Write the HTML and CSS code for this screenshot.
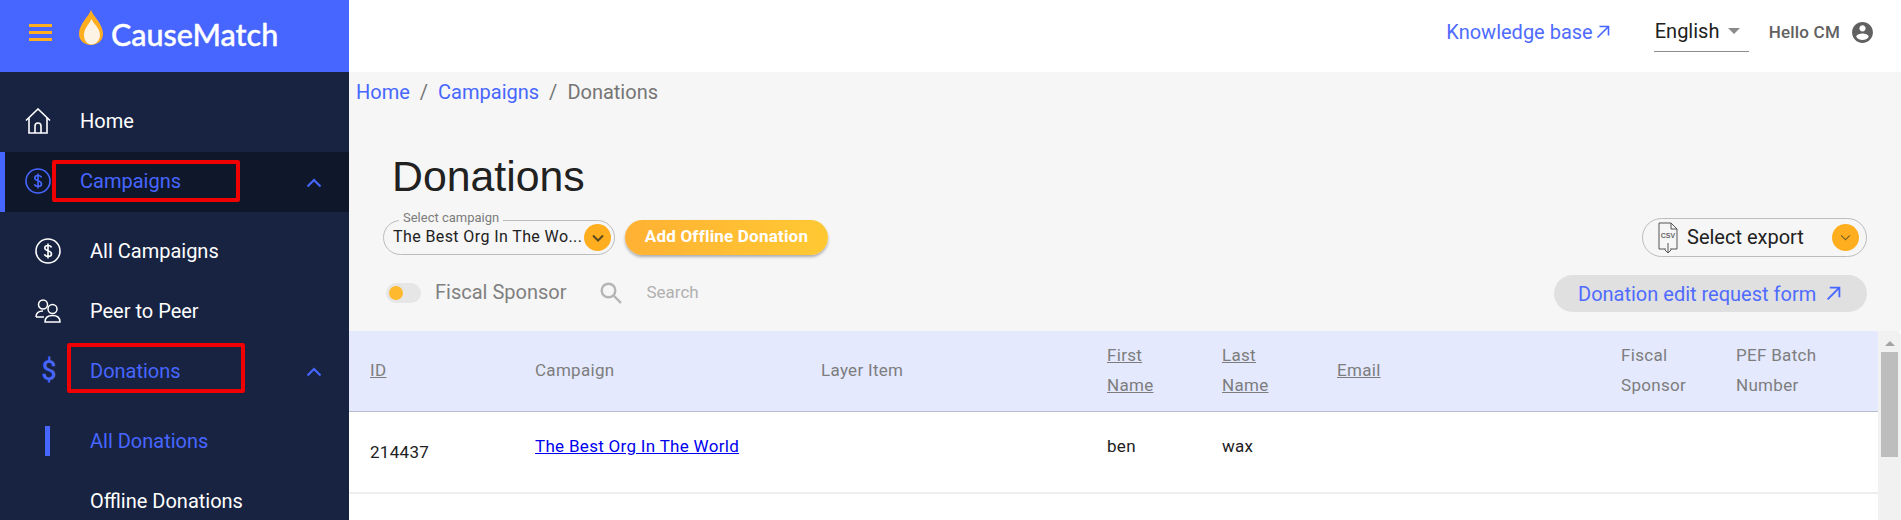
FILE: index.html
```html
<!DOCTYPE html>
<html lang="en">

<head>
    <meta charset="UTF-8">
    <meta name="viewport" content="width=device-width, initial-scale=1.0">
    <title>CauseMatch - Donations</title>
    <link rel="stylesheet" href="styles.css">
</head>

<body>
    <div class="app">
        <aside class="sidebar">
            <div class="brand">
                <div class="burger"><span></span><span></span><span></span></div>
                <svg class="flame" viewBox="0 0 24 36" width="24" height="36">
                    <path d="M12 0C14 6 24 14 24 24C24 31 18 35 12 35C6 35 0 31 0 24C0 14 10 6 12 0Z" fill="#ffae1f" />
                    <path d="M12.500 9C14.500 14 21 18 21 25C21 30 17 34.500 12.500 34.500C8 34.500 5 30 5 25C5 18 10.500 14 12.500 9Z" fill="#fdf3e4" />
                </svg>
                <span class="brand-name">CauseMatch</span>
            </div>

            <nav class="nav">
                <a class="nav-item">
                    <svg class="nav-icon" viewBox="0 0 26 26" width="26" height="26" fill="none" stroke="#fff" stroke-width="1.6">
                        <path d="M1 12.500L13 1L25 12.500" />
                        <path d="M4 10V25H22V10" />
                        <path d="M10 25V18A3 3 0 0 1 16 18V25" />
                    </svg>
                    Home
                </a>
                <a class="nav-item nav-item-active">
                    <svg class="nav-icon" viewBox="0 0 26 26" width="26" height="26" fill="none" stroke="#4766ff" stroke-width="1.6">
                        <circle cx="13" cy="13" r="12" />
                        <path d="M16.500 9.500C16 8 15 7.500 13 7.500C11 7.500 9.800 8.600 9.800 10C9.800 13.500 16.500 12 16.500 16C16.500 17.500 15 18.500 13 18.500C11 18.500 10 17.800 9.500 16.300M13 5.500V20.500" />
                    </svg>
                    Campaigns
                    <svg class="chevron" viewBox="0 0 16 10" width="16" height="10" fill="none" stroke="#4766ff" stroke-width="2.2">
                        <path d="M1.500 8.500L8 2L14.500 8.500" />
                    </svg>
                </a>
                <div class="sub-nav">
                    <a class="nav-item sub-item">
                        <svg class="nav-icon" viewBox="0 0 26 26" width="26" height="26" fill="none" stroke="#fff" stroke-width="1.6">
                            <circle cx="13" cy="13" r="12" />
                            <path d="M16.500 9.500C16 8 15 7.500 13 7.500C11 7.500 9.800 8.600 9.800 10C9.800 13.500 16.500 12 16.500 16C16.500 17.500 15 18.500 13 18.500C11 18.500 10 17.800 9.500 16.300M13 5.500V20.500" />
                        </svg>
                        All Campaigns
                    </a>
                    <a class="nav-item sub-item">
                        <svg class="nav-icon" viewBox="0 0 26 24" width="26" height="24" fill="none" stroke="#fff" stroke-width="1.5">
                            <circle cx="8" cy="5.500" r="4.500" />
                            <path d="M1 18C1 14 4 12 8 12" />
                            <path d="M1 18H9" />
                            <circle cx="17.500" cy="10" r="4.500" />
                            <path d="M10 23C10 18 13 16.500 17.500 16.500C22 16.500 25 18 25 23Z" />
                        </svg>
                        Peer to Peer
                    </a>
                    <a class="nav-item sub-item sub-item-open">
                        <span class="dollar">$</span>
                        Donations
                        <svg class="chevron" viewBox="0 0 16 10" width="16" height="10" fill="none" stroke="#4766ff" stroke-width="2.2">
                            <path d="M1.500 8.500L8 2L14.500 8.500" />
                        </svg>
                    </a>
                    <div class="leaf-nav">
                        <a class="nav-item sub-item leaf-active"><span class="leaf-bar"></span>All Donations</a>
                        <a class="nav-item sub-item"><span class="leaf-spacer"></span>Offline Donations</a>
                    </div>
                </div>
            </nav>

            <div class="mark mark-campaigns"></div>
            <div class="mark mark-donations"></div>
        </aside>

        <div class="content">
            <header class="topbar">
                <a class="kb-link">Knowledge base
                    <svg viewBox="0 0 14 14" width="14" height="14" fill="none" stroke="#4766ff" stroke-width="1.6">
                        <path d="M1.500 12.500L12.500 1.500M3.500 1.500H12.500V10.500" />
                    </svg>
                </a>
                <div class="lang">English<span class="caret"></span></div>
                <div class="user">
                    Hello CM
                    <svg viewBox="0 0 24 24" width="25" height="25" fill="#616161">
                        <path d="M12 2C6.480 2 2 6.480 2 12s4.480 10 10 10 10-4.480 10-10S17.520 2 12 2zm0 3c1.660 0 3 1.340 3 3s-1.340 3-3 3-3-1.340-3-3 1.340-3 3-3zm0 14.200c-2.500 0-4.710-1.280-6-3.220.030-1.990 4-3.080 6-3.080 1.990 0 5.970 1.090 6 3.080-1.290 1.940-3.500 3.220-6 3.220z" />
                    </svg>
                </div>
            </header>

            <main class="main">
                <div class="breadcrumb">
                    <a>Home</a><span class="sep">/</span><a>Campaigns</a><span class="sep">/</span><span class="current">Donations</span>
                </div>

                <h1 class="page-title">Donations</h1>

                <div class="toolbar">
                    <div class="toolbar-left">
                        <div class="toolbar-row">
                            <div class="select-campaign">
                                <span class="select-label">Select campaign</span>
                                <span class="select-value">The Best Org In The Wo...</span>
                                <span class="round-btn round-btn-dark">
                                    <svg viewBox="0 0 12 8" width="12" height="8" fill="none" stroke="#5a4a20" stroke-width="2">
                                        <path d="M1 1.500L6 6.500L11 1.500" />
                                    </svg>
                                </span>
                            </div>
                            <button class="add-btn" type="button">Add Offline Donation</button>
                        </div>
                        <div class="filter-row">
                            <span class="toggle"><span class="toggle-knob"></span></span>
                            <span class="toggle-label">Fiscal Sponsor</span>
                            <svg class="search-icon" viewBox="0 0 22 22" width="22" height="22" fill="none" stroke="#b5b5b5" stroke-width="2.400">
                                <circle cx="8.500" cy="8.500" r="6.800" />
                                <path d="M13.500 13.500L21 21" />
                            </svg>
                            <span class="search-text">Search</span>
                        </div>
                    </div>

                    <div class="toolbar-right">
                        <div class="select-export">
                            <svg class="csv-icon" viewBox="0 0 20 32" width="20" height="32" fill="none" stroke="#555" stroke-width="1">
                                <path d="M8 27H1V1H13L19 7V27H12" />
                                <path d="M13 1V7H19" />
                                <path d="M10 21V31M6.500 27.500L10 31L13.500 27.500" />
                                <text x="10" y="16" text-anchor="middle" class="csv-text">CSV</text>
                            </svg>
                            <span class="export-text">Select export</span>
                            <span class="round-btn round-btn-large">
                                <svg viewBox="0 0 12 8" width="11" height="7" fill="none" stroke="#7a6226" stroke-width="1.300">
                                    <path d="M1 1.500L6 6.500L11 1.500" />
                                </svg>
                            </span>
                        </div>
                        <a class="edit-form-btn">Donation edit request form
                            <svg viewBox="0 0 14 14" width="15" height="15" fill="none" stroke="#4766ff" stroke-width="1.700">
                                <path d="M1.500 12.500L12.500 1.500M3.500 1.500H12.500V10.500" />
                            </svg>
                        </a>
                    </div>
                </div>

                <div class="table-wrap">
                    <div class="table">
                        <div class="table-row table-head">
                            <div class="cell"><u>ID</u></div>
                            <div class="cell">Campaign</div>
                            <div class="cell">Layer Item</div>
                            <div class="cell"><u>First<br>Name</u></div>
                            <div class="cell"><u>Last<br>Name</u></div>
                            <div class="cell"><u>Email</u></div>
                            <div class="cell">Fiscal<br>Sponsor</div>
                            <div class="cell">PEF Batch<br>Number</div>
                        </div>
                        <div class="table-row table-body-row">
                            <div class="cell cell-id">214437</div>
                            <div class="cell cell-up"><a class="campaign-link">The Best Org In The World</a></div>
                            <div class="cell"></div>
                            <div class="cell cell-up">ben</div>
                            <div class="cell cell-up">wax</div>
                            <div class="cell"></div>
                            <div class="cell"></div>
                            <div class="cell"></div>
                        </div>
                    </div>
                    <div class="scrollbar">
                        <span class="scroll-arrow"></span>
                        <span class="scroll-thumb"></span>
                    </div>
                </div>
            </main>
        </div>
    </div>
</body>

</html>
```

FILE: styles.css
```css
* {
    margin: 0;
    padding: 0;
    box-sizing: border-box;
}

body {
    font-family: Roboto, 'Liberation Sans', sans-serif;
    height: 100vh;
    overflow: hidden;
    background: #f6f6f6;
    color: #212121;
}

.app {
    display: flex;
    height: 100vh;
    overflow: hidden;
}

/* Sidebar */
.sidebar {
    position: relative;
    width: 349px;
    flex-shrink: 0;
    background: #172341;
    color: white;
}

.brand {
    display: flex;
    align-items: flex-start;
    height: 72px;
    background: #4766ff;
    padding: 10px 0 0 29px;
}

.burger {
    display: flex;
    flex-direction: column;
    gap: 4.5px;
    width: 23px;
    margin-top: 14px;
}

.burger span {
    display: block;
    height: 2.5px;
    background: #ffae1f;
}

.flame {
    margin-left: 27px;
}

.brand-name {
    margin: 6px 0 0 8px;
    font-family: Lato, sans-serif;
    font-size: 30.5px;
    font-weight: 500;
    line-height: 36px;
    -webkit-text-stroke: 0.4px white;
}

.nav {
    padding-top: 20px;
}

.nav-item {
    position: relative;
    display: flex;
    align-items: center;
    height: 60px;
    padding-left: 25px;
    padding-bottom: 2px;
    font-size: 20px;
    font-weight: 400;
    color: white;
}

.nav-icon {
    margin-right: 29px;
    flex-shrink: 0;
}

.nav-item-active {
    background: #0f172b;
    border-left: 5px solid #4766ff;
    padding-left: 20px;
    color: #4766ff;
}

.chevron {
    position: absolute;
    right: 27px;
    top: 26px;
}

.sub-nav {
    padding-top: 9px;
}

.sub-item {
    padding-left: 35px;
    padding-bottom: 0;
}

.sub-item-open {
    color: #4766ff;
}

.dollar {
    width: 26px;
    margin: 0 28px 0 1px;
    text-align: center;
    font-size: 27px;
    font-weight: 500;
    color: #4766ff;
}

.leaf-nav {
    padding-top: 10px;
}

.leaf-active {
    color: #4766ff;
}

.leaf-bar {
    width: 5px;
    height: 30px;
    margin: 0 40px 0 10px;
    background: #4766ff;
}

.leaf-spacer {
    width: 55px;
}

/* Red marks drawn over the menu */
.mark {
    position: absolute;
    border: 4px solid #f00000;
    border-radius: 2px;
}

.mark-campaigns {
    left: 52px;
    top: 160px;
    width: 188px;
    height: 42px;
}

.mark-donations {
    left: 67px;
    top: 343px;
    width: 178px;
    height: 50px;
}

/* Top bar */
.content {
    flex: 1;
    min-width: 0;
    display: flex;
    flex-direction: column;
}

.topbar {
    display: flex;
    align-items: center;
    justify-content: flex-end;
    height: 72px;
    flex-shrink: 0;
    background: white;
    padding: 0 26px 8px 0;
}

.kb-link {
    display: flex;
    align-items: center;
    gap: 3px;
    font-size: 20px;
    color: #4f6bff;
}

.lang {
    display: flex;
    align-items: center;
    width: 95px;
    height: 40px;
    margin-left: 44px;
    border-bottom: 1px solid #8c8c8c;
    padding: 0 0 2px 1px;
    font-size: 20px;
}

.caret {
    margin-left: 9px;
    border-left: 6px solid transparent;
    border-right: 6px solid transparent;
    border-top: 6px solid #8a8a8a;
}

.user {
    display: flex;
    align-items: center;
    gap: 10px;
    margin-left: 20px;
    font-size: 17px;
    font-weight: 500;
    letter-spacing: 0.2px;
    color: #616161;
}

/* Main area */
.main {
    flex: 1;
    min-height: 0;
}

.breadcrumb {
    display: flex;
    padding: 9px 0 0 7px;
    font-size: 20px;
    line-height: 22px;
    color: #4766ff;
}

.sep {
    margin: 0 10px;
    color: #757575;
}

.current {
    color: #757575;
}

.page-title {
    margin: 49px 0 0 43px;
    font-family: 'Liberation Sans', sans-serif;
    font-size: 42.8px;
    font-weight: 400;
    line-height: 48px;
}

.toolbar {
    display: flex;
    justify-content: space-between;
    height: 131px;
    padding: 20px 34px 0 34px;
}

.toolbar-row {
    display: flex;
    align-items: center;
    gap: 10px;
}

.select-campaign {
    position: relative;
    display: flex;
    align-items: center;
    width: 232px;
    height: 35px;
    border: 1px solid #bcbcbc;
    border-radius: 18px;
    padding-left: 9px;
}

.select-label {
    position: absolute;
    left: 15px;
    top: -10px;
    background: #f6f6f6;
    padding: 0 4px;
    font-size: 13px;
    line-height: 14px;
    color: #7c7c7c;
}

.select-value {
    padding-bottom: 2px;
    font-size: 16px;
    letter-spacing: 0.4px;
}

.round-btn {
    position: absolute;
    display: flex;
    align-items: center;
    justify-content: center;
    border-radius: 50%;
    background: #ffae1f;
}

.round-btn-dark {
    right: 3px;
    top: 3px;
    width: 27px;
    height: 27px;
}

.round-btn-large {
    right: 7px;
    top: 5px;
    width: 27px;
    height: 27px;
}

.add-btn {
    width: 203px;
    height: 35px;
    border: none;
    border-radius: 18px;
    background: linear-gradient(90deg, #ffb133 0%, #ffc933 100%);
    box-shadow: 0 2px 3px rgba(0, 0, 0, 0.3);
    padding-bottom: 3px;
    font-family: inherit;
    font-size: 17px;
    font-weight: 700;
    letter-spacing: 0.2px;
    color: white;
}

.filter-row {
    display: flex;
    align-items: center;
    margin-top: 25px;
    padding-left: 3px;
}

.toggle {
    display: flex;
    align-items: center;
    width: 35px;
    height: 20px;
    border-radius: 10px;
    background: #e6e6e6;
    padding-left: 3px;
}

.toggle-knob {
    width: 14px;
    height: 14px;
    border-radius: 50%;
    background: #ffb92e;
}

.toggle-label {
    margin-left: 14px;
    padding-bottom: 2px;
    font-size: 20px;
    color: #808080;
}

.search-icon {
    margin-left: 34px;
}

.search-text {
    margin-left: 24px;
    padding-bottom: 2px;
    font-size: 17px;
    color: #b0b0b0;
}

.toolbar-right {
    display: flex;
    flex-direction: column;
    align-items: flex-end;
    margin-top: -2px;
}

.select-export {
    position: relative;
    display: flex;
    align-items: center;
    width: 225px;
    height: 39px;
    border: 1px solid #bcbcbc;
    border-radius: 20px;
    padding-left: 15px;
}

.csv-icon {
    flex-shrink: 0;
}

.csv-text {
    font-family: 'Liberation Sans', sans-serif;
    font-size: 7px;
    font-weight: 700;
    fill: #666;
    stroke: none;
}

.export-text {
    margin-left: 9px;
    padding-bottom: 2px;
    font-size: 20px;
}

.edit-form-btn {
    display: flex;
    align-items: center;
    gap: 10px;
    width: 313px;
    height: 37px;
    margin-top: 18px;
    border-radius: 19px;
    background: #e0e0e0;
    padding-left: 24px;
    font-size: 20px;
    color: #4f6bff;
}

/* Table */
.table-wrap {
    display: flex;
    height: 189px;
    background: white;
}

.table {
    flex: 1;
    min-width: 0;
}

.table-row {
    display: grid;
    grid-template-columns: 165px 286px 286px 115px 115px 284px 115px 163px;
    font-size: 17px;
    line-height: 30px;
    letter-spacing: 0.3px;
}

.table-head {
    height: 81px;
    align-items: center;
    background: #e4e9fd;
    border-bottom: 1px solid #b9bccb;
    padding-bottom: 2px;
    color: #7d7d7d;
}

.table-body-row {
    height: 82px;
    align-items: center;
    border-bottom: 2px solid #eeeeee;
}

.cell {
    padding-left: 21px;
}

.cell-id {
    padding-bottom: 1px;
}

.cell-up {
    padding-bottom: 12px;
}

.campaign-link {
    color: #0000ee;
    text-decoration: underline;
}

.scrollbar {
    display: flex;
    flex-direction: column;
    align-items: center;
    width: 23px;
    background: #f1f1f1;
    border-top-right-radius: 5px;
}

.scroll-arrow {
    margin-top: 10px;
    border-left: 5px solid transparent;
    border-right: 5px solid transparent;
    border-bottom: 5px solid #a3a3a3;
}

.scroll-thumb {
    width: 17px;
    height: 105px;
    margin-top: 6px;
    background: #bdbdbd;
}
```
